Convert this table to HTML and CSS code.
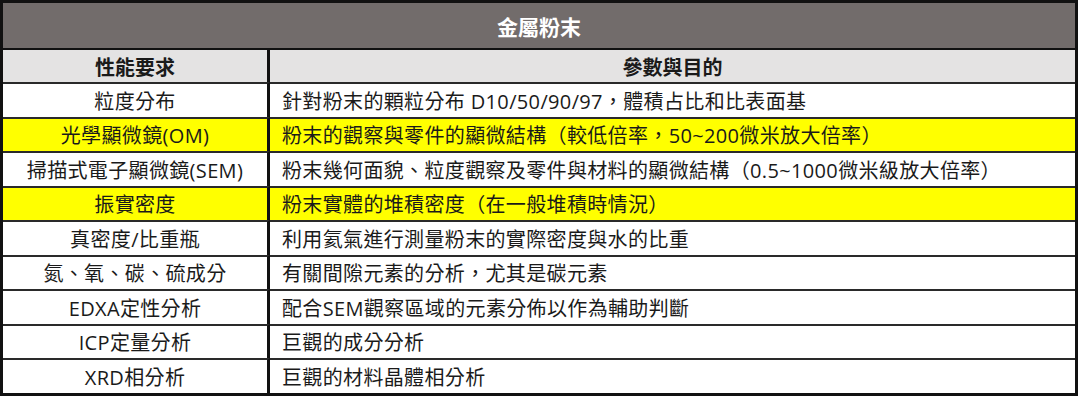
FILE: index.html
```html
<!DOCTYPE html>
<html lang="zh-Hant">
<head>
<meta charset="utf-8">
<title>金屬粉末</title>
<link rel="stylesheet" href="styles.css">
</head>
<body>
<table class="spec">
  <colgroup>
    <col class="c-a">
    <col class="c-b">
  </colgroup>
  <thead>
    <tr class="title-row"><th colspan="2">金屬粉末</th></tr>
    <tr class="head-row"><th class="col-a">性能要求</th><th class="col-b">參數與目的</th></tr>
  </thead>
  <tbody>
    <tr><td class="col-a">粒度分布</td><td class="col-b">針對粉末的顆粒分布 D10/50/90/97，體積占比和比表面基</td></tr>
    <tr class="hl"><td class="col-a">光學顯微鏡(OM)</td><td class="col-b">粉末的觀察與零件的顯微結構（較低倍率，50~200微米放大倍率）</td></tr>
    <tr><td class="col-a">掃描式電子顯微鏡(SEM)</td><td class="col-b">粉末幾何面貌、粒度觀察及零件與材料的顯微結構（0.5~1000微米級放大倍率）</td></tr>
    <tr class="hl"><td class="col-a">振實密度</td><td class="col-b">粉末實體的堆積密度（在一般堆積時情況）</td></tr>
    <tr><td class="col-a">真密度/比重瓶</td><td class="col-b">利用氦氣進行測量粉末的實際密度與水的比重</td></tr>
    <tr><td class="col-a">氮、氧、碳、硫成分</td><td class="col-b">有關間隙元素的分析，尤其是碳元素</td></tr>
    <tr><td class="col-a">EDXA定性分析</td><td class="col-b">配合SEM觀察區域的元素分佈以作為輔助判斷</td></tr>
    <tr><td class="col-a">ICP定量分析</td><td class="col-b">巨觀的成分分析</td></tr>
    <tr><td class="col-a">XRD相分析</td><td class="col-b">巨觀的材料晶體相分析</td></tr>
  </tbody>
</table>
</body>
</html>
```

FILE: styles.css
```css
html, body {
  margin: 0;
  padding: 0;
  background: #ffffff;
}

.spec {
  width: 1078px;
  border: 3px solid #111;
  border-collapse: separate;
  border-spacing: 0;
  font-family: "Open Sans", "Noto Sans CJK TC", sans-serif;
  font-size: 20px;
  color: #1a1a1a;
  table-layout: fixed;
}

.c-a {
  width: 267px;
}

.spec th,
.spec td {
  padding: 0;
  vertical-align: middle;
  white-space: nowrap;
  overflow: hidden;
}

.title-row th {
  height: 45px;
  background: #726c6b;
  color: #ffffff;
  font-size: 21px;
  font-weight: 700;
  text-align: center;
}

.head-row th {
  height: 32px;
  background: #e4e3e3;
  border-top: 2px solid #111;
  font-weight: 700;
  text-align: center;
}

.spec td {
  height: 32.5px;
  border-top: 2px solid #2a2a2a;
  background: #ffffff;
  letter-spacing: 0.35px;
}

.col-a {
  border-right: 3px solid #111;
  text-align: center;
}

td.col-b {
  text-align: left;
  padding-left: 12px;
}

.spec tr.hl td {
  background: #ffff00;
}
```
